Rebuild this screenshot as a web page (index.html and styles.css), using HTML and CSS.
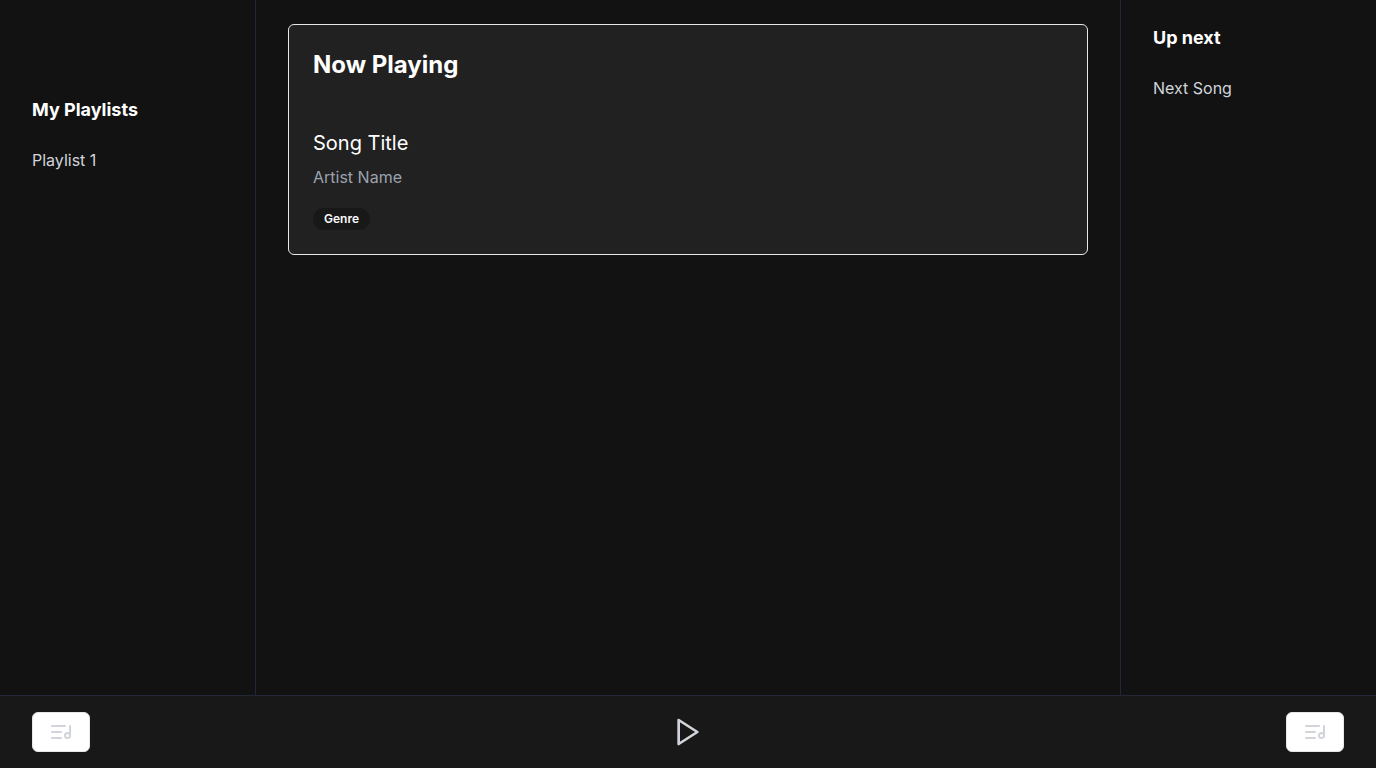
FILE: index.html
```html
<!DOCTYPE html>
<html lang="en">
<head>
  <meta charset="utf-8">
  <meta name="viewport" content="width=device-width, initial-scale=1">
  <title>Music Player</title>
  <link rel="stylesheet" href="styles.css">
</head>
<body>
  <div class="app">
    <div class="columns">
      <nav class="sidebar sidebar-left" aria-labelledby="playlists-title">
        <h2 class="sidebar-title" id="playlists-title">My Playlists</h2>
        <ul class="track-list">
          <li>Playlist 1</li>
        </ul>
      </nav>
      <main class="content">
        <section class="card">
          <h1 class="card-title">Now Playing</h1>
          <h2 class="song-title">Song Title</h2>
          <p class="artist">Artist Name</p>
          <span class="badge">Genre</span>
        </section>
      </main>
      <aside class="sidebar sidebar-right" aria-labelledby="queue-title">
        <h2 class="sidebar-title" id="queue-title">Up next</h2>
        <ul class="track-list">
          <li>Next Song</li>
        </ul>
      </aside>
    </div>
    <footer class="player">
      <button class="list-button" type="button" aria-label="Playlists">
        <svg class="icon" viewBox="0 0 24 24" aria-hidden="true">
          <path d="M21 15V6"/>
          <path d="M18.5 18a2.5 2.5 0 1 0 0-5 2.5 2.5 0 0 0 0 5Z"/>
          <path d="M12 12H3"/>
          <path d="M16 6H3"/>
          <path d="M12 18H3"/>
        </svg>
      </button>
      <button class="play-button" type="button" aria-label="Play">
        <svg class="icon icon-large" viewBox="0 0 24 24" aria-hidden="true">
          <polygon points="5 3 19 12 5 21 5 3"/>
        </svg>
      </button>
      <button class="list-button" type="button" aria-label="Queue">
        <svg class="icon" viewBox="0 0 24 24" aria-hidden="true">
          <path d="M21 15V6"/>
          <path d="M18.5 18a2.5 2.5 0 1 0 0-5 2.5 2.5 0 0 0 0 5Z"/>
          <path d="M12 12H3"/>
          <path d="M16 6H3"/>
          <path d="M12 18H3"/>
        </svg>
      </button>
    </footer>
  </div>
</body>
</html>
```

FILE: styles.css
```css
*,
*::before,
*::after {
  box-sizing: border-box;
}

body {
  margin: 0;
  background: #121212;
  color: #d1d5db;
  font-family: Inter, "Liberation Sans", sans-serif;
  font-size: 16px;
  line-height: 24px;
}

h1,
h2,
p,
ul {
  margin: 0;
  padding: 0;
}

.app {
  display: flex;
  flex-direction: column;
  min-height: 100vh;
}

.columns {
  display: flex;
  flex: 1;
}

.sidebar {
  flex: 0 0 256px;
  padding: 24px 32px;
}

.sidebar-left {
  padding-top: 96px;
  border-right: 1px solid #232637;
}

.sidebar-right {
  border-left: 1px solid #232637;
}

.sidebar-title {
  margin-bottom: 24px;
  color: #fff;
  font-size: 18px;
  font-weight: 700;
  line-height: 28px;
}

.track-list {
  list-style: none;
}

.content {
  flex: 1;
  min-width: 0;
  padding: 24px 32px;
}

.card {
  display: flex;
  flex-direction: column;
  align-items: flex-start;
  padding: 24px;
  border: 1px solid #e5e7eb;
  border-radius: 6px;
  background: #212121;
}

.card-title {
  margin-bottom: 48px;
  color: #fff;
  font-size: 24px;
  font-weight: 700;
  line-height: 32px;
}

.song-title {
  margin-bottom: 8px;
  color: #fff;
  font-size: 20px;
  font-weight: 400;
  line-height: 28px;
}

.artist {
  margin-bottom: 19px;
  color: #9ca3af;
}

.badge {
  padding: 3px 11px;
  border-radius: 11px;
  background: #181818;
  color: #f8fafc;
  font-size: 12px;
  font-weight: 600;
  line-height: 16px;
}

.player {
  display: flex;
  align-items: center;
  justify-content: space-between;
  padding: 16px 32px;
  border-top: 1px solid #232637;
  background: #181818;
}

.list-button,
.play-button {
  display: flex;
  align-items: center;
  justify-content: center;
  color: #d1d5db;
  cursor: pointer;
}

.list-button {
  height: 40px;
  padding: 0 16px;
  border: 1px solid #e5e7eb;
  border-radius: 6px;
  background: #fff;
}

.play-button {
  padding: 0;
  border: 0;
  background: transparent;
}

.icon {
  width: 24px;
  height: 24px;
  fill: none;
  stroke: currentColor;
  stroke-width: 2;
  stroke-linecap: round;
  stroke-linejoin: round;
}

.icon-large {
  width: 32px;
  height: 32px;
}
```
